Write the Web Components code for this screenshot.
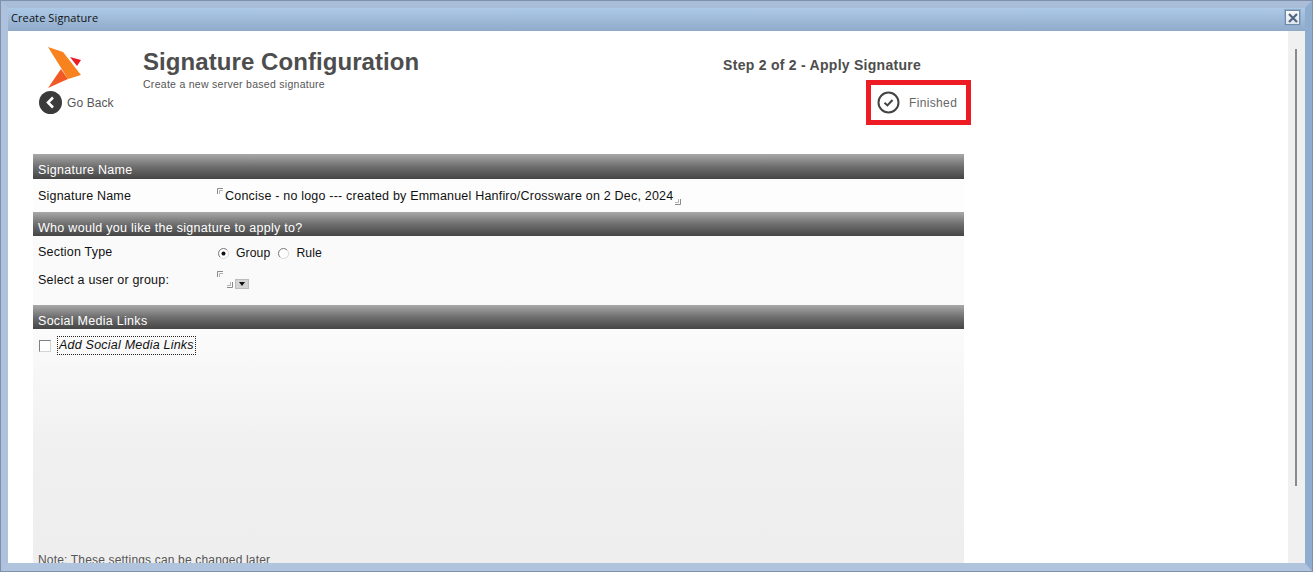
<!DOCTYPE html>
<html>
<head>
<meta charset="utf-8">
<title>Create Signature</title>
<style>
    html, body { margin: 0; height: 100%; overflow: hidden; background: #b1c5df; }
    body { font-family: 'Liberation Sans', Arial, sans-serif; }
</style>
</head>
<body>
<dialog-window heading="Create Signature">
    <div style="display:flex;flex-direction:column;width:931px;margin-left:25px;">
        <sig-header></sig-header>

        <form-section heading="Signature Name" bg="#fdfdfd" height="33" head="25">
            <form-row label="Signature Name" pad="9">
                <field-mark></field-mark><span>Concise - no logo --- created by Emmanuel Hanfiro/Crossware on 2 Dec, 2024</span><field-mark end></field-mark>
            </form-row>
        </form-section>

        <form-section heading="Who would you like the signature to apply to?" bg="#fafafa" height="69">
            <form-row label="Section Type" pad="7">
                <radio-option checked>Group</radio-option>
                <radio-option>Rule</radio-option>
            </form-row>
            <form-row label="Select a user or group:" pad="9">
                <field-mark></field-mark><field-mark end></field-mark><drop-arrow></drop-arrow>
            </form-row>
        </form-section>

        <form-section heading="Social Media Links" fade height="238">
            <check-option>Add Social Media Links</check-option>
            <span slot="note">Note: These settings can be changed later</span>
        </form-section>
    </div>
</dialog-window>

<script>
class DialogWindow extends HTMLElement {
    connectedCallback() {
        this.attachShadow({ mode: 'open' });
        this.shadowRoot.innerHTML = `
            <style>
                :host {
                    display: flex;
                    flex-direction: column;
                    position: relative;
                    box-sizing: border-box;
                    width: 1313px;
                    height: 572px;
                    border-style: solid;
                    border-width: 8px 8px 9px 8px;
                    border-color: #a9bcd8 #8fadce #b1c4de #aec2dd;
                    outline: 1px solid #8090a8;
                    outline-offset: -1px;
                    overflow: hidden;
                }
                :host::after {
                    content: '';
                    position: absolute;
                    left: -8px;
                    right: -8px;
                    bottom: -7px;
                    height: 2px;
                    background: #7188a8;
                }
                .bar {
                    flex: none;
                    box-sizing: border-box;
                    height: 23px;
                    display: flex;
                    align-items: center;
                    justify-content: space-between;
                    padding: 0 5px 4px 3px;
                    font-family: 'Open Sans', 'Liberation Sans', sans-serif;
                    font-size: 11px;
                    letter-spacing: 0.1px;
                    color: #111;
                    background: linear-gradient(#adc9e8, #8fabc9);
                }
                .close {
                    box-sizing: border-box;
                    width: 15px;
                    height: 15px;
                    border: 1px solid #6f8cab;
                    outline: 1px solid #8fabc9;
                    background: linear-gradient(#fbfbfb, #dfe6ee);
                    display: flex;
                    align-items: center;
                    justify-content: center;
                }
                .body {
                    flex: 1;
                    min-height: 0;
                    display: flex;
                    background: #fff;
                    overflow: hidden;
                }
                .page {
                    flex: 1;
                    min-width: 0;
                    overflow: hidden;
                }
                .track {
                    flex: none;
                    width: 17px;
                    background: #f0f0f0;
                    padding-top: 18px;
                    box-sizing: border-box;
                }
                .thumb {
                    width: 2px;
                    height: 437px;
                    margin-left: 7px;
                    background: #8a8a8a;
                }
            </style>
            <div class="bar">
                <span>${this.getAttribute('heading')}</span>
                <div class="close">
                    <svg width="10" height="10" viewBox="0 0 10 10"><path d="M1 1 L9 9 M9 1 L1 9" stroke="#4f6682" stroke-width="2.2"/></svg>
                </div>
            </div>
            <div class="body">
                <div class="page"><slot></slot></div>
                <div class="track"><div class="thumb"></div></div>
            </div>
        `;
    }
}

class SigHeader extends HTMLElement {
    connectedCallback() {
        this.attachShadow({ mode: 'open' });
        this.shadowRoot.innerHTML = `
            <style>
                :host {
                    display: flex;
                    height: 123px;
                    box-sizing: border-box;
                    padding-top: 15px;
                    color: #4d4d4d;
                }
                .left {
                    width: 110px;
                    flex: none;
                    display: flex;
                    flex-direction: column;
                }
                .logo { margin-left: 14px; display: block; }
                .back {
                    display: flex;
                    align-items: center;
                    gap: 5px;
                    margin: 2px 0 0 6px;
                    font-size: 12px;
                    letter-spacing: 0.1px;
                    color: #555;
                }
                .mid { flex: 1; min-width: 0; }
                h1 {
                    margin: 2px 0 0;
                    font-size: 24px;
                    line-height: 28px;
                    font-weight: 700;
                    letter-spacing: 0.07px;
                    color: #4d4d4d;
                }
                p {
                    margin: 2px 0 0;
                    font-size: 10.5px;
                    line-height: 12px;
                    letter-spacing: 0.28px;
                    color: #555;
                }
                .right {
                    flex: none;
                    width: 248px;
                    margin-right: -7px;
                    display: flex;
                    flex-direction: column;
                    align-items: flex-end;
                }
                .step {
                    margin: 10px 50px 0 0;
                    font-size: 14px;
                    line-height: 18px;
                    font-weight: 700;
                    letter-spacing: 0.27px;
                    white-space: nowrap;
                    color: #4d4d4d;
                }
                .done {
                    margin-top: 6px;
                    box-sizing: border-box;
                    width: 105px;
                    height: 45px;
                    border: 5px solid #ed1c24;
                    display: flex;
                    align-items: center;
                    gap: 9px;
                    padding-left: 6px;
                    font-size: 12px;
                    letter-spacing: 0.35px;
                    color: #666;
                }
            </style>
            <div class="left">
                <svg class="logo" width="36" height="43" viewBox="0 0 36 43">
                    <polygon points="23,11 34,14 30,20" fill="#ed1c24"/>
                    <polygon points="14,23 21,33 1,42" fill="#f15a24"/>
                    <polygon points="1,1 16,6 34,29 21,33" fill="#f7821e"/>
                </svg>
                <div class="back">
                    <svg width="23" height="23" viewBox="0 0 23 23">
                        <circle cx="11.5" cy="11.5" r="11.5" fill="#3a3a3a"/>
                        <path d="M14 6.5 L9 11.5 L14 16.5" fill="none" stroke="#fff" stroke-width="2.6"/>
                    </svg>
                    <span>Go Back</span>
                </div>
            </div>
            <div class="mid">
                <h1>Signature Configuration</h1>
                <p>Create a new server based signature</p>
            </div>
            <div class="right">
                <div class="step">Step 2 of 2 - Apply Signature</div>
                <div class="done">
                    <svg width="23" height="23" viewBox="0 0 23 23">
                        <circle cx="11.5" cy="11.5" r="10" fill="none" stroke="#444" stroke-width="2"/>
                        <path d="M7.5 11.8 L10.4 14.4 L15.5 9" fill="none" stroke="#444" stroke-width="2"/>
                    </svg>
                    <span>Finished</span>
                </div>
            </div>
        `;
    }
}

class FormSection extends HTMLElement {
    connectedCallback() {
        const bg = this.hasAttribute('fade')
            ? 'linear-gradient(#fbfbfb, #f0f0f0 50%, #eeeeee)'
            : this.getAttribute('bg');
        this.attachShadow({ mode: 'open' });
        this.shadowRoot.innerHTML = `
            <style>
                :host { display: block; }
                .head {
                    box-sizing: border-box;
                    height: ${this.getAttribute('head') || 24}px;
                    padding: 8px 0 0 5px;
                    font-size: 12.5px;
                    line-height: 17px;
                    letter-spacing: 0.29px;
                    color: #fff;
                    background: linear-gradient(#a9a9a9, #6f6f6f 50%, #454545);
                }
                .content {
                    box-sizing: border-box;
                    height: ${this.getAttribute('height')}px;
                    background: ${bg};
                    display: flex;
                    flex-direction: column;
                }
                .note {
                    margin-top: auto;
                    padding-left: 5px;
                    font-size: 12px;
                    line-height: 14px;
                    letter-spacing: 0.17px;
                    color: #555;
                }
            </style>
            <div class="head">${this.getAttribute('heading')}</div>
            <div class="content">
                <slot></slot>
                <div class="note"><slot name="note"></slot></div>
            </div>
        `;
    }
}

class FormRow extends HTMLElement {
    connectedCallback() {
        this.attachShadow({ mode: 'open' });
        this.shadowRoot.innerHTML = `
            <style>
                :host {
                    display: flex;
                    align-items: center;
                    padding: ${this.getAttribute('pad')}px 0 0 5px;
                    font-size: 12.5px;
                    line-height: 17px;
                    letter-spacing: 0.2px;
                    color: #111;
                }
                .label { width: 179px; flex: none; }
                .value { display: flex; align-items: center; }
            </style>
            <span class="label">${this.getAttribute('label')}</span>
            <span class="value"><slot></slot></span>
        `;
    }
}

// little corner marks of a Notes field
class FieldMark extends HTMLElement {
    connectedCallback() {
        const end = this.hasAttribute('end');
        this.attachShadow({ mode: 'open' });
        this.shadowRoot.innerHTML = `
            <style>
                :host {
                    display: block;
                    width: 6px;
                    height: 6px;
                    margin: ${end ? '10px 2px 0 2px' : '-12px 2px 0 0'};
                }
                svg { display: block; }
            </style>
            <svg width="6" height="6" viewBox="0 0 6 6">
                <path d="${end ? 'M0 5.5 H5.5 V0' : 'M0.5 6 V0.5 H6'}" fill="none" stroke="#8a8a8a"/>
                <path d="${end ? 'M0 3.5 H3.5 V0' : 'M2.5 6 V2.5 H6'}" fill="none" stroke="#b5b5b5"/>
            </svg>
        `;
    }
}

class RadioOption extends HTMLElement {
    connectedCallback() {
        const on = this.hasAttribute('checked');
        this.attachShadow({ mode: 'open' });
        this.shadowRoot.innerHTML = `
            <style>
                :host {
                    display: inline-flex;
                    align-items: center;
                    gap: 7px;
                    margin: 0 7px 0 1px;
                    padding-top: 2px;
                    font-size: 12.2px;
                    letter-spacing: 0.1px;
                }
                svg { display: block; }
            </style>
            <svg width="11" height="11" viewBox="0 0 11 11">
                <circle cx="5.5" cy="5.5" r="5" fill="#fff" stroke="#d4d4d4"/>
                <path d="M1.96 9.04 A5 5 0 0 1 9.04 1.96" fill="none" stroke="#808080"/>
                ${on ? '<circle cx="5.5" cy="5.5" r="2" fill="#111"/>' : ''}
            </svg>
            <span><slot></slot></span>
        `;
    }
}

class DropArrow extends HTMLElement {
    connectedCallback() {
        this.attachShadow({ mode: 'open' });
        this.shadowRoot.innerHTML = `
            <style>
                :host {
                    display: flex;
                    align-items: center;
                    justify-content: center;
                    box-sizing: border-box;
                    width: 14px;
                    height: 10px;
                    margin-top: 8px;
                    background: #d4d4d4;
                    border: 1px solid #bcbcbc;
                }
                i {
                    border: 3px solid transparent;
                    border-top: 4px solid #111;
                    border-bottom: 0;
                }
            </style>
            <i></i>
        `;
    }
}

class CheckOption extends HTMLElement {
    connectedCallback() {
        this.attachShadow({ mode: 'open' });
        this.shadowRoot.innerHTML = `
            <style>
                :host {
                    display: flex;
                    align-items: center;
                    gap: 7px;
                    padding: 8px 0 0 6px;
                    font-size: 12.5px;
                    line-height: 17px;
                    font-style: italic;
                    color: #111;
                }
                .box {
                    box-sizing: border-box;
                    width: 12px;
                    height: 12px;
                    border: 1px solid;
                    border-color: #808080 #d4d4d4 #d4d4d4 #808080;
                    background: #fff;
                }
                .text { outline: 1px dotted #222; outline-offset: 0; padding: 0 1px; letter-spacing: 0.22px; }
            </style>
            <span class="box"></span>
            <span class="text"><slot></slot></span>
        `;
    }
}

customElements.define('dialog-window', DialogWindow);
customElements.define('sig-header', SigHeader);
customElements.define('form-section', FormSection);
customElements.define('form-row', FormRow);
customElements.define('field-mark', FieldMark);
customElements.define('radio-option', RadioOption);
customElements.define('drop-arrow', DropArrow);
customElements.define('check-option', CheckOption);
</script>
</body>
</html>
